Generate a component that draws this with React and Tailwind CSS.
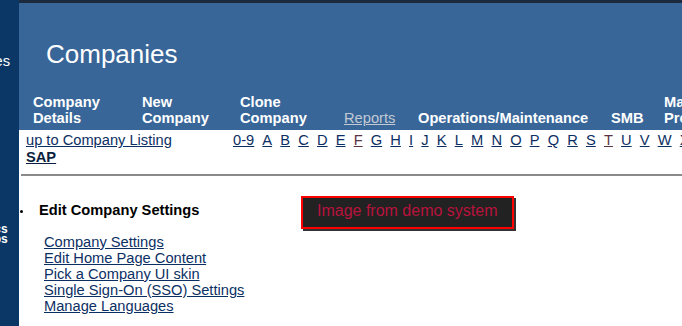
import React from "react";

const navItems = [
  { label: ["Company", "Details"], w: "w-[109px]" },
  { label: ["New", "Company"], w: "w-[98px]" },
  { label: ["Clone", "Company"], w: "w-[104px]" },
  { label: ["Reports"], w: "w-[74px]", muted: true },
  { label: ["Operations/Maintenance"], w: "w-[193px]" },
  { label: ["SMB"], w: "w-[53px]" },
  { label: ["Manage", "Profiles"], w: "w-[120px]" },
];

const letters = [
  "0-9", "A", "B", "C", "D", "E", "F", "G", "H", "I", "J", "K", "L", "M",
  "N", "O", "P", "Q", "R", "S", "T", "U", "V", "W", "X", "Y", "Z",
];

const settingsLinks = [
  "Company Settings",
  "Edit Home Page Content",
  "Pick a Company UI skin",
  "Single Sign-On (SSO) Settings",
  "Manage Languages",
];

const Sidebar = () => {
  return (
    <aside className="flex w-[19px] shrink-0 flex-col items-end overflow-hidden bg-[#0b3767] text-white">
      <div className="mt-[53px] whitespace-nowrap pr-[9px]">Companies</div>
      <div className="mt-[155px] flex flex-col items-end pr-[11.3px] text-[12px] font-bold leading-[10px]">
        <div className="whitespace-nowrap">Docs</div>
        <div className="whitespace-nowrap">Apps</div>
      </div>
    </aside>
  );
};

const Header = () => {
  return (
    <header className="flex h-[130px] shrink-0 flex-col border-t-[3px] border-[#1b2a3d] bg-[#386699] text-white">
      <h1 className="pl-[27px] pt-[35.7px] text-[26px] leading-[30px]">Companies</h1>
      <nav className="mt-auto flex items-end pb-[4.4px] pl-[14px] font-bold">
        {navItems.map((item) => (
          <div
            key={item.label.join(" ")}
            className={`${item.w} shrink-0 ${
              item.muted ? "font-normal text-[#c3cad3] underline" : ""
            }`}
          >
            {item.label.map((line) => (
              <div key={line} className="whitespace-nowrap">
                {line}
              </div>
            ))}
          </div>
        ))}
      </nav>
    </header>
  );
};

const Body = () => {
  return (
    <div className="pt-[2.2px] text-[#0c2f63]">
      <div className="flex">
        <div className="w-[214px] shrink-0 pl-[7px]">
          <a href="#" className="block underline">
            up to Company Listing
          </a>
          <a href="#" className="mt-[1px] block font-bold text-[#0a1f3f] underline">
            SAP
          </a>
        </div>
        <div className="flex shrink-0 gap-[8.16px] whitespace-nowrap">
          {letters.map((l) => (
            <a
              key={l}
              href="#"
              className={`underline ${l === "F" || l === "T" ? "text-[#5a3342]" : ""}`}
            >
              {l}
            </a>
          ))}
        </div>
      </div>

      <div className="ml-[2px] mt-[9px] h-[2px] bg-[#8a8a8a]" />

      <div className="mt-[20px] flex items-start">
        <span className="ml-[1px] mt-[14px] size-[3px] shrink-0 rounded-full bg-black" />
        <div className="ml-[16px] w-[262px] shrink-0 pt-[5.6px] font-bold text-black">
          Edit Company Settings
        </div>
        <div className="h-[33px] w-[213px] shrink-0 border-2 border-[#ff0000] bg-[#222222] pl-[14px] pt-[4.7px] text-[16px] leading-[16px] text-[#b8123d] shadow-[2px_2px_0_#333333]">
          Image from demo system
        </div>
      </div>

      <div className="mt-[4.6px] flex flex-col items-start pl-[25px]">
        {settingsLinks.map((s) => (
          <a key={s} href="#" className="underline">
            {s}
          </a>
        ))}
      </div>
    </div>
  );
};

export default function App() {
  return (
    <div className="flex h-[326px] w-full overflow-hidden bg-white font-['Liberation_Sans',Arial,sans-serif] text-[14.67px] leading-[16px]">
      <Sidebar />
      <main className="flex min-w-0 flex-1 flex-col overflow-hidden">
        <Header />
        <Body />
      </main>
    </div>
  );
}
